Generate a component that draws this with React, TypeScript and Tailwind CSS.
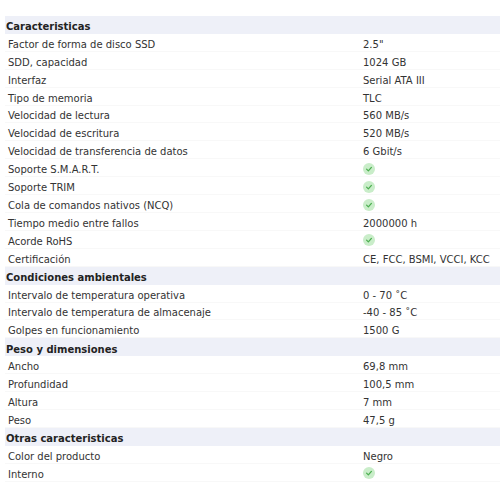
import React from 'react';

type Row = { label: string; value?: string; check?: boolean };
type Section = { title: string; rows: Row[] };

const SECTIONS: Section[] = [
    {
        title: 'Caracteristicas',
        rows: [
            { label: 'Factor de forma de disco SSD', value: '2.5"' },
            { label: 'SDD, capacidad', value: '1024 GB' },
            { label: 'Interfaz', value: 'Serial ATA III' },
            { label: 'Tipo de memoria', value: 'TLC' },
            { label: 'Velocidad de lectura', value: '560 MB/s' },
            { label: 'Velocidad de escritura', value: '520 MB/s' },
            { label: 'Velocidad de transferencia de datos', value: '6 Gbit/s' },
            { label: 'Soporte S.M.A.R.T.', check: true },
            { label: 'Soporte TRIM', check: true },
            { label: 'Cola de comandos nativos (NCQ)', check: true },
            { label: 'Tiempo medio entre fallos', value: '2000000 h' },
            { label: 'Acorde RoHS', check: true },
            { label: 'Certificación', value: 'CE, FCC, BSMI, VCCI, KCC' },
        ],
    },
    {
        title: 'Condiciones ambientales',
        rows: [
            { label: 'Intervalo de temperatura operativa', value: '0 - 70 ˚C' },
            { label: 'Intervalo de temperatura de almacenaje', value: '-40 - 85 ˚C' },
            { label: 'Golpes en funcionamiento', value: '1500 G' },
        ],
    },
    {
        title: 'Peso y dimensiones',
        rows: [
            { label: 'Ancho', value: '69,8 mm' },
            { label: 'Profundidad', value: '100,5 mm' },
            { label: 'Altura', value: '7 mm' },
            { label: 'Peso', value: '47,5 g' },
        ],
    },
    {
        title: 'Otras caracteristicas',
        rows: [
            { label: 'Color del producto', value: 'Negro' },
            { label: 'Interno', check: true },
        ],
    },
];

const Check: React.FC = () => (
    <span className="flex items-center justify-center w-[12px] h-[12px] rounded-full bg-[#c9edc9] -mt-[2px]">
        <svg width="8" height="8" viewBox="0 0 10 10" fill="none">
            <path d="M2 5.2 L4.2 7.3 L8 3" stroke="#4cae50" strokeWidth="1.6" strokeLinecap="round" strokeLinejoin="round" />
        </svg>
    </span>
);

const SpecRow: React.FC<{ row: Row }> = ({ row }) => (
    <div className="flex items-center h-[17.92px] pt-[4px] border-b border-[#f8f8f8]">
        <div className="w-[358px] pl-[3px] shrink-0 truncate">{row.label}</div>
        <div className="flex-1">{row.check ? <Check /> : row.value}</div>
    </div>
);

export default function App() {
    return (
        <div className="w-[500px] h-[500px] bg-white pt-4 pl-[5px] text-[10px] text-[#333] font-['DejaVu_Sans',sans-serif] overflow-hidden">
            {SECTIONS.map(section => (
                <div key={section.title}>
                    <div className="flex items-center h-[17.92px] pt-[4px] bg-[#eef0f8] pl-[1px] font-bold text-[#222]">
                        {section.title}
                    </div>
                    {section.rows.map(row => <SpecRow key={row.label} row={row} />)}
                </div>
            ))}
        </div>
    );
}
